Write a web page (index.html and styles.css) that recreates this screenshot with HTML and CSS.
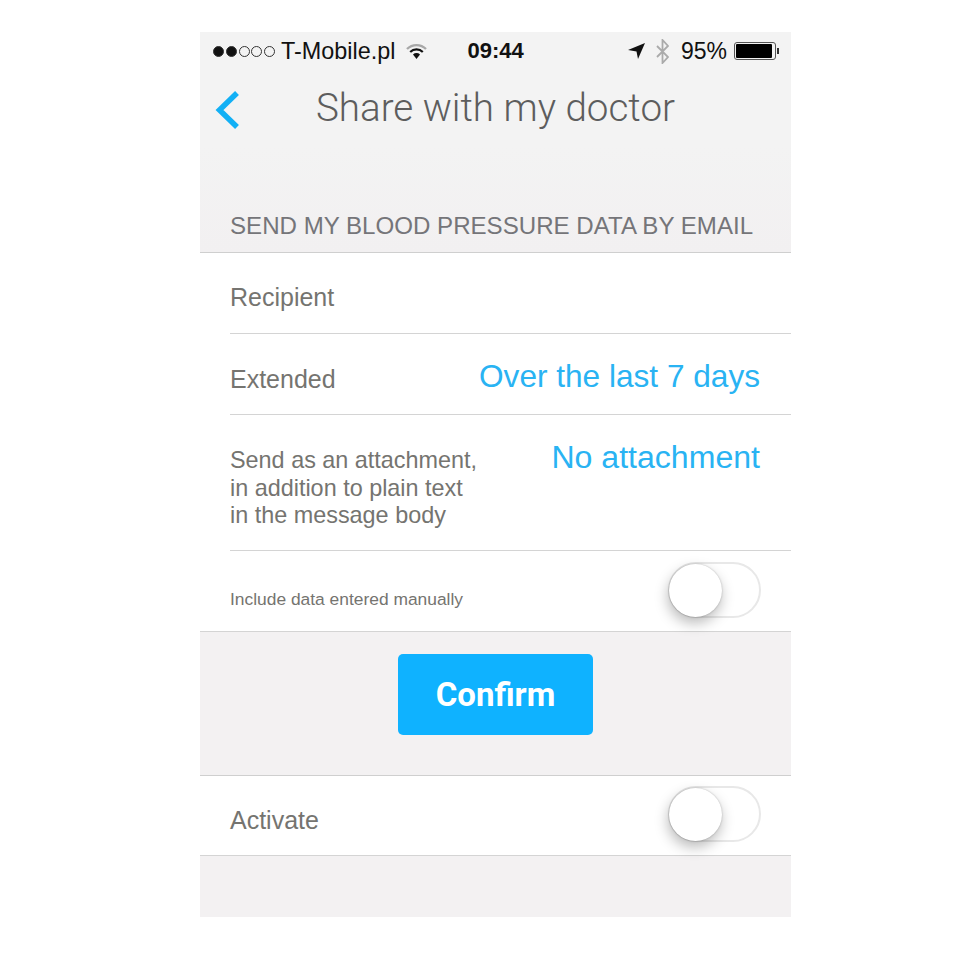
FILE: index.html
```html
<!DOCTYPE html>
<html lang="en">
<head>
    <meta charset="UTF-8">
    <title>Share with my doctor</title>
    <link rel="stylesheet" href="styles.css">
</head>
<body>
    <div class="phone">
        <div class="status">
            <span class="dots"><i class="on"></i><i class="on"></i><i></i><i></i><i></i></span>
            <span class="carrier">T-Mobile.pl</span>
            <svg class="wifi" width="21" height="16" viewBox="0 0 21 16">
                <path d="M1 6 A13.500 13.500 0 0 1 20 6" fill="none" stroke="#a8a8a8" stroke-width="2.400"/>
                <path d="M4.200 9 A9 9 0 0 1 16.800 9" fill="none" stroke="#111" stroke-width="2.200"/>
                <path d="M7 11.500 L10.500 16 L14 11.500 A5 5 0 0 0 7 11.500 Z" fill="#111"/>
            </svg>
            <span class="time">09:44</span>
            <span class="status-right">
                <svg width="17" height="16" viewBox="0 0 17 16"><path d="M17 0 L10 16 L8.500 8.500 L0 7 Z" fill="#111"/></svg>
                <svg class="bt" width="13" height="25" viewBox="0 0 13 25"><path d="M1 7 L12 18 L6.500 24 L6.500 1 L12 7 L1 18" fill="none" stroke="#aaa" stroke-width="1.800"/></svg>
                <span class="pct">95%</span>
                <span class="battery"><span class="level"></span></span><span class="nub"></span>
            </span>
        </div>

        <div class="navbar">
            <svg class="back" width="28" height="40" viewBox="0 0 28 40"><path d="M24 3 L6.500 20 L24 37" fill="none" stroke="#12b0f5" stroke-width="5.500"/></svg>
            <h1>Share with my doctor</h1>
        </div>

        <div class="section-title">SEND MY BLOOD PRESSURE DATA BY EMAIL</div>

        <div class="list">
            <div class="row row-recipient"><span class="label">Recipient</span></div>
            <div class="row row-extended">
                <span class="label">Extended</span>
                <span class="value">Over the last 7 days</span>
            </div>
            <div class="row row-attach">
                <span class="label small">Send as an attachment,<br>in addition to plain text<br>in the message body</span>
                <span class="value">No attachment</span>
            </div>
            <div class="row row-manual">
                <span class="label tiny">Include data entered manually</span>
                <span class="switch"><span class="knob"></span></span>
            </div>
        </div>

        <div class="confirm-area">
            <button type="button" class="confirm">Confirm</button>
        </div>

        <div class="list">
            <div class="row row-activate">
                <span class="label">Activate</span>
                <span class="switch"><span class="knob"></span></span>
            </div>
        </div>

        <div class="footer"></div>
    </div>
</body>
</html>
```

FILE: styles.css
```css
body {
    margin: 0;
    background-color: #fff;
    font-family: "Liberation Sans", Arial, sans-serif;
}

.phone {
    width: 591px;
    height: 885px;
    margin: 32px 0 0 200px;
    background-color: #f3f3f3;
    display: flex;
    flex-direction: column;
}

/* Status bar */
.status {
    height: 38px;
    display: flex;
    align-items: center;
    padding: 0 12px 0 13px;
    color: #111;
    font-size: 23.400px;
}

.dots {
    display: flex;
    gap: 1.750px;
}

.dots i {
    width: 11px;
    height: 11px;
    box-sizing: border-box;
    border: 1px solid #333;
    border-radius: 50%;
}

.dots i.on {
    background-color: #111;
}

.carrier {
    margin-left: 6px;
}

.wifi {
    margin-left: 11px;
}

.time {
    margin-left: 40px;
    font-size: 22px;
    font-weight: bold;
}

.status-right {
    margin-left: auto;
    display: flex;
    align-items: center;
}

.bt {
    margin-left: 11px;
}

.pct {
    margin-left: 12px;
    font-size: 23px;
}

.battery {
    width: 42px;
    height: 18px;
    box-sizing: border-box;
    margin-left: 7px;
    padding: 1px;
    border: 1px solid #555;
    border-radius: 3px;
    display: block;
}

.level {
    display: block;
    width: 94%;
    height: 100%;
    background-color: #000;
    border-radius: 1px;
}

.nub {
    width: 2px;
    height: 6px;
    margin-left: 1px;
    background-color: #333;
}

/* Navigation */
.navbar {
    height: 76px;
    position: relative;
    display: flex;
    justify-content: center;
}

.back {
    position: absolute;
    left: 13px;
    top: 20px;
}

.navbar h1 {
    margin: 15px 0 0 0;
    font-family: Roboto, sans-serif;
    font-weight: 300;
    font-size: 38.600px;
    line-height: 46px;
    color: #5d5d5d;
}

.section-title {
    height: 107px;
    box-sizing: border-box;
    padding: 66px 0 0 30px;
    font-size: 24.100px;
    line-height: 28px;
    color: #757579;
    background-image: linear-gradient(#f3f3f3, #f2f0f1);
    border-bottom: 1px solid #cfcfcf;
}

/* Rows */
.list {
    background-color: #fff;
}

.row {
    box-sizing: border-box;
    margin-left: 30px;
    padding-right: 30px;
    display: flex;
    justify-content: space-between;
    border-bottom: 1px solid #d4d4d4;
}

.row-recipient {
    height: 81px;
    padding-top: 30px;
}

.row-extended {
    height: 81px;
    padding-top: 24px;
}

.row-extended .label {
    margin-top: 7px;
}

.row-attach {
    height: 136px;
    padding-top: 24px;
}

.row-attach .label {
    margin-top: 8px;
}

.row-manual {
    height: 81px;
    margin-left: 0;
    padding-left: 30px;
    padding-top: 11px;
    align-items: flex-start;
}

.row-activate {
    height: 81px;
    margin-left: 0;
    padding-left: 30px;
    padding-top: 10px;
    border-top: 1px solid #cfcfcf;
    align-items: flex-start;
}

.label {
    font-size: 25px;
    line-height: 28px;
    color: #757470;
}

.label.small {
    font-size: 23.400px;
    line-height: 27.500px;
}

.label.tiny {
    font-size: 17.400px;
    line-height: 20px;
    margin-top: 27px;
}

.row-activate .label {
    margin-top: 20px;
}

.value {
    margin-right: 1px;
    font-size: 31.600px;
    line-height: 36px;
    color: #29b3f3;
}

.row-attach .value {
    font-size: 32.100px;
}

/* Switch */
.switch {
    width: 93px;
    height: 56px;
    box-sizing: border-box;
    border: 2px solid #e8e8e8;
    border-radius: 28px;
    position: relative;
    display: block;
}

.knob {
    position: absolute;
    left: -1px;
    top: 0;
    width: 53px;
    height: 53px;
    border-radius: 50%;
    background-color: #fff;
    box-shadow: -1px 6px 14px rgba(0, 0, 0, 0.28), 0 0 2px rgba(0, 0, 0, 0.25);
}

/* Confirm */
.confirm-area {
    height: 143px;
    box-sizing: border-box;
    padding-top: 22px;
    display: flex;
    justify-content: center;
    align-items: flex-start;
    background-color: #f3f1f2;
}

.confirm {
    width: 195px;
    height: 81px;
    border: none;
    border-radius: 5px;
    background-color: #0fb2ff;
    color: #fff;
    font-family: Roboto, sans-serif;
    font-weight: 700;
    font-size: 33px;
}

.footer {
    flex: 1;
    background-color: #f3f1f2;
}
```
